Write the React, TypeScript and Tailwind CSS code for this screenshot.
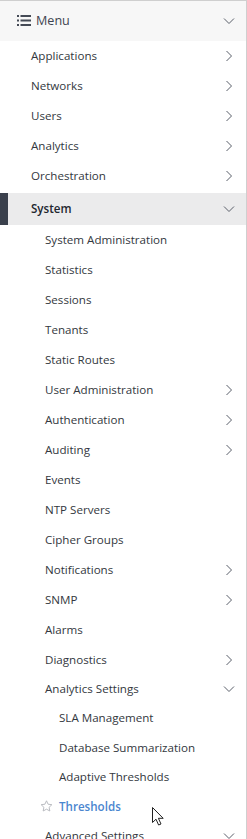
import React from "react";

type Item = {
  label: string;
  arrow?: "right" | "down";
};

const systemItems: Item[] = [
  { label: "System Administration" },
  { label: "Statistics" },
  { label: "Sessions" },
  { label: "Tenants" },
  { label: "Static Routes" },
  { label: "User Administration", arrow: "right" },
  { label: "Authentication", arrow: "right" },
  { label: "Auditing", arrow: "right" },
  { label: "Events" },
  { label: "NTP Servers" },
  { label: "Cipher Groups" },
  { label: "Notifications", arrow: "right" },
  { label: "SNMP", arrow: "right" },
  { label: "Alarms" },
  { label: "Diagnostics", arrow: "right" },
];

const topItems = ["Applications", "Networks", "Users", "Analytics", "Orchestration"];

const analyticsItems = ["SLA Management", "Database Summarization", "Adaptive Thresholds"];

const ChevronRight = () => (
  <svg width="8" height="12" viewBox="0 0 8 12" fill="none" className="text-[#5a5f6a]">
    <path d="M1.5 1L6.5 6L1.5 11" stroke="currentColor" strokeWidth="1" />
  </svg>
);

const ChevronDown = () => (
  <svg width="12" height="8" viewBox="0 0 12 8" fill="none" className="text-[#5a5f6a]">
    <path d="M1 1.5L6 6.5L11 1.5" stroke="currentColor" strokeWidth="1" />
  </svg>
);

const ListIcon = () => (
  <svg width="14" height="11" viewBox="0 0 14 11" fill="#444a55">
    <rect x="0" y="0" width="2" height="2" />
    <rect x="0" y="4.5" width="2" height="2" />
    <rect x="0" y="9" width="2" height="2" />
    <rect x="3.5" y="0" width="10.5" height="2" />
    <rect x="3.5" y="4.5" width="10.5" height="2" />
    <rect x="3.5" y="9" width="10.5" height="2" />
  </svg>
);

const Row = ({ label, arrow, indent }: Item & { indent: string }) => (
  <div className={`flex h-[30px] items-center justify-between pr-[13px] ${indent}`}>
    <span>{label}</span>
    {arrow === "right" && <ChevronRight />}
    {arrow === "down" && <ChevronDown />}
  </div>
);

export default function App() {
  return (
    <div
      className="relative h-[839px] w-[247px] overflow-hidden border-t border-r border-[#cfcfcf] bg-white text-[11.6px] text-[#333840]"
      style={{ fontFamily: '"Open Sans", "Noto Sans", sans-serif' }}
    >
      {/* header */}
      <div className="flex h-[40px] items-center justify-between bg-[#f7f7f7] pl-[17px] pr-[11px]">
        <div className="flex items-center gap-[5px] text-[12.6px] text-[#3e4450]">
          <ListIcon />
          <span>Menu</span>
        </div>
        <ChevronDown />
      </div>

      {topItems.map((t) => (
        <div key={t} className="flex h-[30px] items-center justify-between pl-[31px] pr-[13px]">
          <span>{t}</span>
          <ChevronRight />
        </div>
      ))}

      {/* active section */}
      <div className="mt-[2px] flex h-[32px] items-center justify-between bg-[#ebebec]">
        <div className="flex h-full items-center">
          <div className="h-full w-[8px] bg-[#3a404c]" />
          <span className="pl-[23px] font-semibold text-[#222730]">System</span>
        </div>
        <div className="pr-[11px]">
          <ChevronDown />
        </div>
      </div>

      {systemItems.map((it) => (
        <Row key={it.label} {...it} indent="pl-[45px]" />
      ))}

      <div className="flex h-[28px] items-center justify-between pl-[45px] pr-[11px]">
        <span>Analytics Settings</span>
        <ChevronDown />
      </div>

      {analyticsItems.map((t) => (
        <div key={t} className="flex h-[29.5px] items-center pl-[59px]">
          {t}
        </div>
      ))}

      <div className="flex h-[29.5px] items-center pl-[40px]">
        <svg width="13" height="12" viewBox="0 0 24 23" fill="none" stroke="#b5b8bd" strokeWidth="1.8">
          <path d="M12 1.5l3.1 6.6 7.2.9-5.3 5 1.4 7.1L12 17.6l-6.4 3.5 1.4-7.1-5.3-5 7.2-.9z" />
        </svg>
        <span className="pl-[6px] font-semibold text-[#4a86cf]">Thresholds</span>
      </div>

      <div className="flex h-[30px] items-center justify-between pl-[45px] pr-[11px]">
        <span>Advanced Settings</span>
        <ChevronDown />
      </div>

      {/* mouse pointer */}
      <svg
        className="absolute left-[152px] top-[806px]"
        width="13"
        height="19"
        viewBox="0 0 13 19"
      >
        <path
          d="M0.5 0.5V15.5L4 12.2L6.6 18L9 17L6.4 11.3H11.2Z"
          fill="white"
          stroke="#222"
          strokeWidth="1"
          strokeLinejoin="round"
        />
      </svg>
    </div>
  );
}
